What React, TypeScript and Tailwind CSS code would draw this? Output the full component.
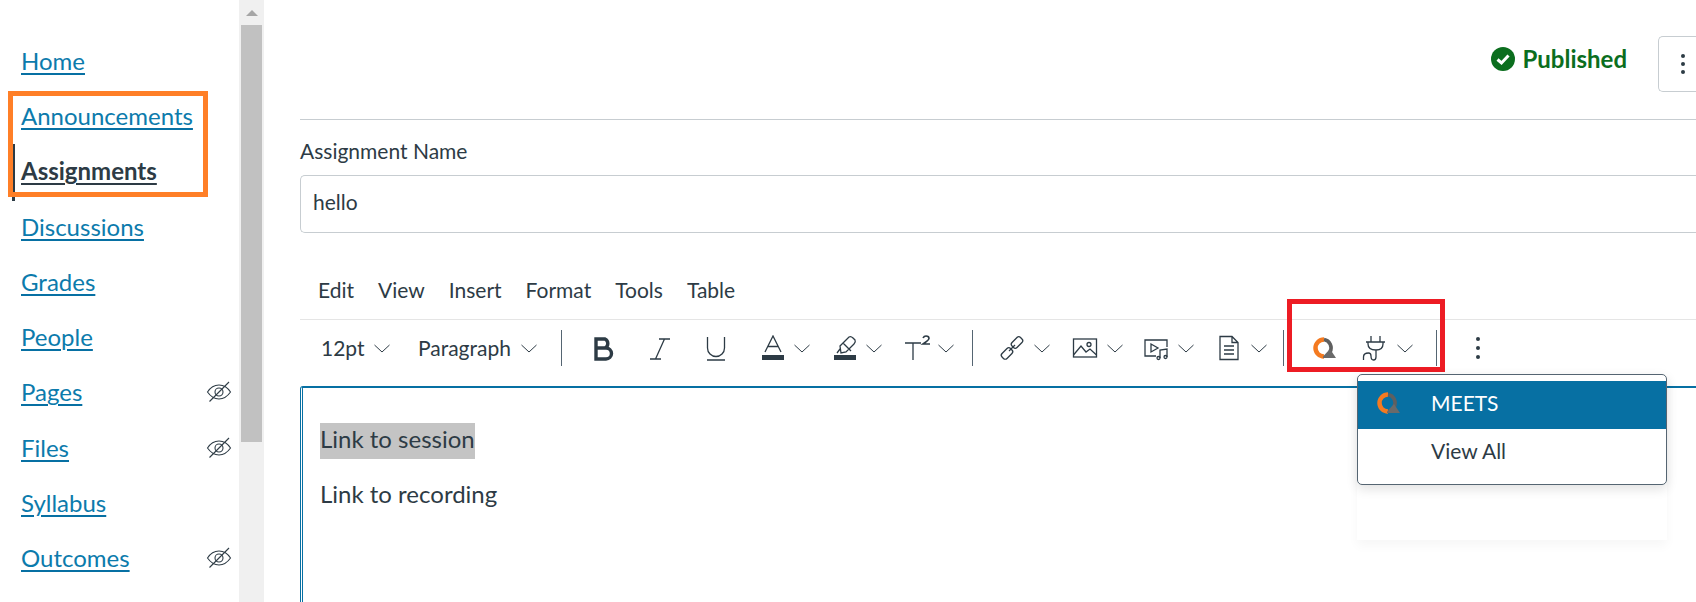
import type { ReactNode } from 'react'

const NAV = [
  { label: 'Home' },
  { label: 'Announcements' },
  { label: 'Assignments', active: true },
  { label: 'Discussions' },
  { label: 'Grades' },
  { label: 'People' },
  { label: 'Pages', hidden: true },
  { label: 'Files', hidden: true },
  { label: 'Syllabus' },
  { label: 'Outcomes', hidden: true },
]

const MENU = ['Edit', 'View', 'Insert', 'Format', 'Tools', 'Table']

function Chevron() {
  return (
    <svg width="16" height="9" viewBox="0 0 16 9" fill="none" stroke="#2d3b45" strokeWidth="1" className="shrink-0">
      <path d="M0.5 1 L8 8 L15.5 1" />
    </svg>
  )
}

function Icon({ children }: { children: ReactNode }) {
  return (
    <svg width="26" height="26" viewBox="0 0 26 26" fill="none" stroke="#2d3b45" strokeWidth="1.3" className="shrink-0">
      {children}
    </svg>
  )
}

function EyeOff() {
  return (
    <svg width="26" height="22" viewBox="0 0 26 22" fill="none" stroke="#2d3b45" strokeWidth="1.1" className="shrink-0">
      <path d="M1.5 11 C5 5.5 9 4 13 4 C17 4 21 5.5 24.5 11 C21 16 17 18 13 18 C9 18 5 16 1.5 11 Z" />
      <circle cx="13" cy="11" r="4" />
      <path d="M3.5 20.5 L23 1" />
    </svg>
  )
}

function Logo() {
  return (
    <svg width="26" height="26" viewBox="0 0 26 26" fill="none" className="shrink-0">
      <path d="M13 4.5 A8.5 8.5 0 1 0 13 21.5" stroke="#f47a20" strokeWidth="4.5" />
      <path d="M13 4.5 A8.5 8.5 0 0 1 19 17" stroke="#5f5f5f" strokeWidth="3.6" />
      <path d="M12 21.5 L19 14 L25 23 L12 23 Z" fill="#6a6a6a" />
    </svg>
  )
}

function Sep() {
  return <div className="h-9 w-[1px] shrink-0 bg-[#556572]" />
}

function Tool({ icon, w }: { icon: ReactNode; w: string }) {
  return (
    <div className={`flex items-center justify-between shrink-0 ${w}`}>
      {icon}
      <Chevron />
    </div>
  )
}

export default function App() {
  return (
    <div className="relative flex h-[602px] w-[1696px] overflow-hidden bg-white text-[#2d3b45] font-['Lato','Liberation_Sans',sans-serif]">
      <nav className="w-[239px] shrink-0 pt-[33px]">
        {NAV.map(({ label, active, hidden }) => (
          <div key={label} className="relative flex h-[55.3px] items-center justify-between pl-[21px] pr-[7px]">
            {active && <div className="absolute left-[12px] top-[0px] h-[57px] w-[3px] bg-[#2d3b45]" />}
            <a
              className={
                active
                  ? 'text-[24px] font-bold text-[#2d3b45] underline decoration-2 underline-offset-[3px]'
                  : 'text-[24px] text-[#0c7bac] underline decoration-2 underline-offset-[3px] decoration-[#0770a3]'
              }
            >
              {label}
            </a>
            {hidden && <EyeOff />}
          </div>
        ))}
      </nav>

      <div className="flex w-[25px] shrink-0 flex-col items-center bg-[#f0f0f0]">
        <div className="flex h-[25px] items-center">
          <div className="h-0 w-0 border-x-[6px] border-b-[6px] border-x-transparent border-b-[#a6a6a6]" />
        </div>
        <div className="h-[417px] w-[21px] bg-[#c1c1c1]" />
      </div>

      <main className="min-w-0 flex-1 pl-[36px]">
        <div className="flex h-[92px] items-center justify-end pt-[36px]">
          <div className="mb-[10px] flex items-center gap-[7px] pr-[31px]">
            <svg width="24" height="24" viewBox="0 0 24 24" className="shrink-0">
              <circle cx="12" cy="12" r="12" fill="#0b6e1e" />
              <path d="M6.5 12.5 L10.5 16 L17.5 8.5" fill="none" stroke="#fff" strokeWidth="3" />
            </svg>
            <span className="text-[24px] font-bold leading-none text-[#0b6e1e]">Published</span>
          </div>
          <div className="flex h-[56px] w-[38px] items-center rounded-l-[5px] border border-r-0 border-[#c7cdd1] pl-[22px]">
            <div className="flex flex-col gap-[4px]">
              <div className="h-1 w-1 rounded-full bg-[#2d3b45]" />
              <div className="h-1 w-1 rounded-full bg-[#2d3b45]" />
              <div className="h-1 w-1 rounded-full bg-[#2d3b45]" />
            </div>
          </div>
        </div>

        <div className="mt-[27px] h-[1px] bg-[#c7cdd1]" />

        <label className="mt-[19px] block text-[21px] leading-[24px]">Assignment Name</label>
        <div className="mt-[12px] flex h-[58px] items-center rounded-l-[5px] border border-r-0 border-[#c7cdd1] pb-[4px] pl-[12px] text-[21px]">
          hello
        </div>

        <div className="mt-[43px] flex h-[28px] items-center gap-[24px] pl-[18px] text-[21px]">
          {MENU.map(item => (
            <span key={item}>{item}</span>
          ))}
        </div>

        <div className="mt-[15px] h-[1px] bg-[#e5e5e5]" />

        <div className="flex h-[66px] items-center pb-[10px] pl-[21px] text-[21px]">
          <span className="w-[53px] shrink-0">12pt</span>
          <Chevron />
          <span className="ml-[28px] w-[103px] shrink-0">Paragraph</span>
          <Chevron />
          <div className="ml-[24px]">
            <Sep />
          </div>
          <div className="ml-[28px]">
            <Icon>
              <path d="M6 4 H15 A5 5 0 0 1 15 13 H6 Z M6 13 H16 A5.5 5.5 0 0 1 16 24 H6 Z" strokeWidth="3.4" />
            </Icon>
          </div>
          <div className="ml-[31px]">
            <Icon>
              <path d="M12 4 H23 M3 24 H14 M17.5 4 L8.5 24" />
            </Icon>
          </div>
          <div className="ml-[30px]">
            <Icon>
              <path d="M4.5 2 V13 A8.5 8.5 0 0 0 21.5 13 V2 M4 25 H22" />
            </Icon>
          </div>
          <div className="ml-[31px]">
            <Tool
              w="w-[50px]"
              icon={
                <Icon>
                  <path d="M5 17 L13 1 L21 17 M8 11.5 H18" />
                  <rect x="2" y="20" width="22" height="5" fill="#2d3b45" stroke="none" />
                </Icon>
              }
            />
          </div>
          <div className="ml-[22px]">
            <Tool
              w="w-[50px]"
              icon={
                <Icon>
                  <path d="M8 11 L17 2 Q19 1 21 3 L23 5 Q24 7 22 9 L14 17 L9 18 L8 11 Z M11 8 L19 16 M5 18 L8 14" />
                  <rect x="2" y="20" width="22" height="5" fill="#2d3b45" stroke="none" />
                </Icon>
              }
            />
          </div>
          <div className="ml-[22px]">
            <Tool
              w="w-[50px]"
              icon={
                <svg width="28" height="26" viewBox="0 0 28 26" fill="none" stroke="#2d3b45" strokeWidth="1.3" className="shrink-0">
                  <path d="M1 8 H17 M9 8 V25" />
                  <path d="M19 3 Q20 1 22 1 Q25 1 25 3.5 Q25 5 19 9 H26" strokeWidth="1.6" />
                </svg>
              }
            />
          </div>
          <div className="ml-[18px]">
            <Sep />
          </div>
          <div className="ml-[26px]">
            <Tool
              w="w-[51px]"
              icon={
                <Icon>
                  <rect x="2" y="15" width="12" height="7" rx="2.5" transform="rotate(-45 8 18.5)" />
                  <rect x="12" y="4" width="12" height="7" rx="2.5" transform="rotate(-45 18 7.5)" />
                  <path d="M10 16 L16 10" />
                </Icon>
              }
            />
          </div>
          <div className="ml-[22px]">
            <Tool
              w="w-[51px]"
              icon={
                <Icon>
                  <rect x="1.5" y="4" width="23" height="18" />
                  <circle cx="17" cy="9.5" r="2" />
                  <path d="M1.5 20 L9 11 L14 17 L18 14 L24.5 20" />
                </Icon>
              }
            />
          </div>
          <div className="ml-[20px]">
            <Tool
              w="w-[51px]"
              icon={
                <Icon>
                  <path d="M13 21 H2 V5 H24 V12 M8 9 L15 13 L8 17 Z" />
                  <path d="M17 23 V15 L24 14 V22" />
                  <circle cx="15.5" cy="23" r="1.5" />
                  <circle cx="22.5" cy="22" r="1.5" />
                </Icon>
              }
            />
          </div>
          <div className="ml-[22px]">
            <Tool
              w="w-[51px]"
              icon={
                <Icon>
                  <path d="M4 1.5 H16 L22 7.5 V24.5 H4 Z M16 1.5 V7.5 H22 M8 11 H18 M8 15 H18 M8 19 H18" />
                </Icon>
              }
            />
          </div>
          <div className="ml-[16px]">
            <Sep />
          </div>
          <div className="ml-[27px]">
            <Logo />
          </div>
          <div className="ml-[23px]">
            <Tool
              w="w-[53px]"
              icon={
                <Icon>
                  <path d="M11 1 V7 M20 1 V7 M6 7 H25 M8 7 V9 Q8 15 16 15 Q23 15 23 9 V7 M16 15 V22 Q16 25 13.5 25 Q11 25 11 21 Q11 18 8.5 18 Q3.5 18 3.5 22 V25" />
                </Icon>
              }
            />
          </div>
          <div className="ml-[23px]">
            <Sep />
          </div>
          <div className="ml-[39px] flex flex-col gap-[5px]">
            <div className="h-1 w-1 rounded-full bg-[#2d3b45]" />
            <div className="h-1 w-1 rounded-full bg-[#2d3b45]" />
            <div className="h-1 w-1 rounded-full bg-[#2d3b45]" />
          </div>
        </div>

        <div className="h-[240px] rounded-tl-[3px] border-l-[3px] border-t-[2px] border-double border-l-[#0770a3] border-t-[#0770a3] pl-[17px] pt-[35px] text-[24px] [border-top-style:solid]">
          <p className="flex h-[36px]">
            <span className="h-[36px] bg-[#c4c4c4] leading-[32px]">Link to session</span>
          </p>
          <p className="mt-[17px] leading-[36px]">Link to recording</p>
        </div>
      </main>

      {/* annotation boxes drawn over the screenshot */}
      <div className="absolute left-[8px] top-[91px] h-[106px] w-[200px] border-[5px] border-[#ff7f27]" />
      <div className="absolute left-[1287px] top-[299px] h-[73px] w-[158px] border-[5px] border-[#ed1c24]" />

      <div className="absolute left-[1357px] top-[374px] h-[166px] w-[310px] shadow-[0_6px_10px_rgba(0,0,0,0.035)]" />
      <div className="absolute left-[1357px] top-[374px] h-[111px] w-[310px] rounded-[5px] border border-[#556572] bg-white pt-[6px] shadow-[0_4px_12px_rgba(0,0,0,0.12)]">
        <div className="flex h-[48px] items-center bg-[#0770a3] pb-[4px] pl-[17px] text-[21px] text-white">
          <Logo />
          <span className="ml-[30px]">MEETS</span>
        </div>
        <div className="flex h-[44px] items-center pl-[73px] text-[21px]">View All</div>
      </div>
    </div>
  )
}
